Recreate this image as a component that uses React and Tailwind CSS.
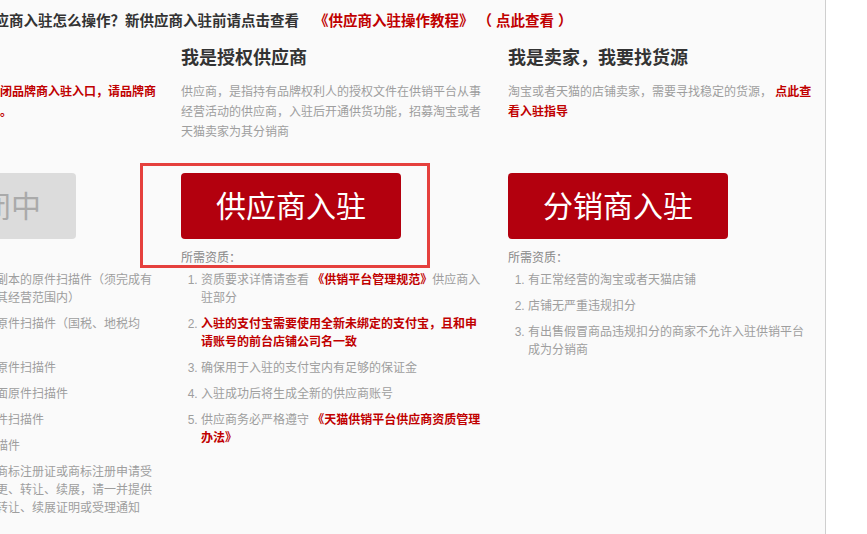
const font = "font-['Liberation_Sans','Noto_Sans_CJK_SC',sans-serif]";

const columns = [
  {
    title: '我是品牌商',
    desc: (
      <span className="font-bold text-[#c00000]">
        现因业务调整，平台暂时关闭品牌商入驻入口，请品牌商耐心等待平台后续开放通知。
      </span>
    ),
    button: '入驻关闭中',
    disabled: true,
    width: 'w-[304px]',
    items: [
      <>公司营业执照正本或者副本的原件扫描件（须完成有<br />效年检且所售商品属于其经营范围内）</>,
      <>税务登记证正本及副本原件扫描件（国税、地税均<br />需提供）</>,
      <>组织机构代码证正副本原件扫描件</>,
      <>法定代表人身份证正反面原件扫描件</>,
      <>一般纳税人资格证书原件扫描件</>,
      <>银行开户许可证原件扫描件</>,
      <>品牌授权书以及品牌的商标注册证或商标注册申请受<br />理通知书，若商标有变更、转让、续展，请一并提供<br />对应商标的相关变更、转让、续展证明或受理通知</>,
    ],
  },
  {
    title: '我是授权供应商',
    desc: (
      <span>供应商，是指持有品牌权利人的授权文件在供销平台从事经营活动的供应商，入驻后开通供货功能，招募淘宝或者天猫卖家为其分销商</span>
    ),
    button: '供应商入驻',
    width: 'w-[306px]',
    items: [
      <>资质要求详情请查看 <span className="font-bold text-[#c00000]">《供销平台管理规范》</span>供应商入驻部分</>,
      <span className="font-bold text-[#c00000]">入驻的支付宝需要使用全新未绑定的支付宝，且和申请账号的前台店铺公司名一致</span>,
      <>确保用于入驻的支付宝内有足够的保证金</>,
      <>入驻成功后将生成全新的供应商账号</>,
      <>供应商务必严格遵守 <span className="font-bold text-[#c00000]">《天猫供销平台供应商资质管理办法》</span></>,
    ],
  },
  {
    title: '我是卖家，我要找货源',
    desc: (
      <>
        <span>淘宝或者天猫的店铺卖家，需要寻找稳定的货源，</span>{' '}
        <span className="font-bold text-[#c00000]">点此查看入驻指导</span>
      </>
    ),
    button: '分销商入驻',
    width: 'w-[306px]',
    items: [
      <>有正常经营的淘宝或者天猫店铺</>,
      <>店铺无严重违规扣分</>,
      <>有出售假冒商品违规扣分的商家不允许入驻供销平台成为分销商</>,
    ],
  },
];

function Column({ col }) {
  return (
    <div className={`${col.width} shrink-0`}>
      <h2 className="text-[18px] leading-[24px] font-bold text-[#333] whitespace-nowrap">{col.title}</h2>
      <div className="mt-[12px] h-[91px] text-[12px] leading-[20px] text-[#9e9e9e]">{col.desc}</div>
      <div
        className={
          col.disabled
            ? 'w-[220px] h-[66px] rounded-[4px] bg-[#dcdcdc] text-[#aaa] flex items-center justify-center text-[30px] font-normal'
            : 'w-[220px] h-[66px] rounded-[4px] bg-[#b3000e] text-white flex items-center justify-center text-[30px] font-normal'
        }
      >
        {col.button}
      </div>
      <div className="mt-[10px] text-[12px] leading-[18px] text-[#888]">所需资质：</div>
      <ol className="mt-[4px] pl-[20px] list-decimal text-[12px] leading-[18px] text-[#9e9e9e]">
        {col.items.map((it, i) => (
          <li key={i} className="mb-[8px]">
            {it}
          </li>
        ))}
      </ol>
    </div>
  );
}

export default function App() {
  return (
    <div className={`w-[867px] h-[534px] overflow-hidden bg-white relative ${font}`}>
      <div className="ml-[-155px] w-[981px] min-h-[534px] bg-[#fafafa] border-r border-[#cfcfcf] pt-[11px]">
        <div className="pl-[135px] text-[14.5px] leading-[20px] font-bold whitespace-nowrap">
          <span className="text-[#333]">供应商入驻怎么操作？新供应商入驻前请点击查看</span>
          <span className="ml-[15px] text-[#c00000]">《供应商入驻操作教程》 （ 点此查看 ）</span>
        </div>
        <div className="mt-[15px] pl-[11px] flex gap-[21px]">
          {columns.map((c, i) => (
            <Column key={i} col={c} />
          ))}
        </div>
      </div>
      <div className="absolute left-[140px] top-[163px] w-[290px] h-[105px] border-[3px] border-[#e5403d] pointer-events-none" />
    </div>
  );
}
